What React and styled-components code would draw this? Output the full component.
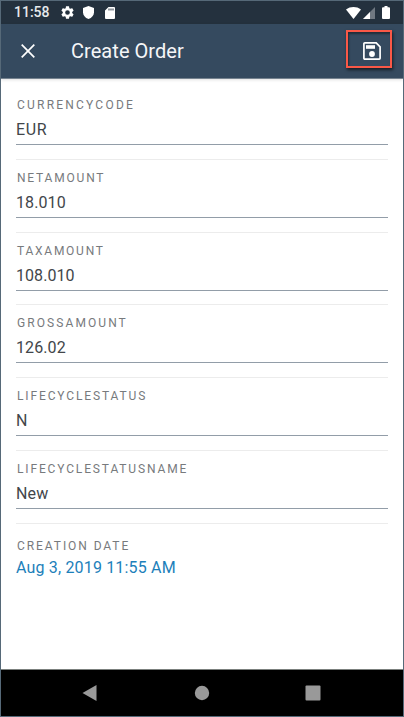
import React from 'react';
import styled, { createGlobalStyle } from 'styled-components';

const GlobalStyle = createGlobalStyle`
  * { box-sizing: border-box; }
  body { margin: 0; background: #fff; }
`;

const Screen = styled.main`
  display: flex;
  flex-direction: column;
  width: 404px;
  height: 717px;
  border: 1px solid #566978;
  background: #fff;
  overflow: hidden;
  font-family: Roboto, "Liberation Sans", sans-serif;
`;

const StatusBar = styled.div`
  display: flex;
  align-items: center;
  flex: none;
  height: 23px;
  padding: 0 13px 0 13px;
  background: #24313e;
  color: #fff;
`;

const Clock = styled.span`
  width: 46px;
  font-size: 14px;
  font-weight: 500;
  line-height: 23px;
  color: #e6e9ec;
`;

const StatusIcon = styled.svg`
  display: block;
  flex: none;
  width: ${(p) => p.$w}px;
  height: ${(p) => p.$h}px;
  margin-left: ${(p) => p.$gap || 0}px;
  fill: #fff;
`;

const Spacer = styled.span`
  flex: 1;
`;

const Toolbar = styled.header`
  display: flex;
  align-items: center;
  flex: none;
  height: 55px;
  padding: 0 11px 0 19px;
  background: #354a5f;
  border-bottom: 1px solid #76838f;
  box-shadow: 0 1px 3px rgba(0, 0, 0, 0.12);
`;

const IconButton = styled.button`
  display: flex;
  width: 16px;
  height: 16px;
  padding: 0;
  border: 0;
  background: none;
`;

const Title = styled.h1`
  flex: 1;
  margin: 0 0 1px 35px;
  font-size: 20px;
  font-weight: 400;
  line-height: 28px;
  color: #f5f6f8;
  letter-spacing: 0.05px;
`;

const SaveButton = styled.button`
  display: flex;
  align-items: center;
  justify-content: center;
  width: 46px;
  height: 38px;
  margin-top: -5px;
  padding: 5px 0 0 6px;
  border: 2px solid #fa5847;
  background: none;
  box-shadow: 1px 2px 3px rgba(0, 0, 0, 0.6), inset 1px 2px 2px rgba(0, 0, 0, 0.4);
`;

const Form = styled.section`
  flex: 1;
  padding: 8px 15px 0;
`;

const Field = styled.div`
  height: 72.8px;
  padding-top: 10.1px;
  border-bottom: 1px solid #ececec;
`;

const Label = styled.div`
  padding-left: 1px;
  height: 16px;
  font-size: 12px;
  line-height: 16px;
  letter-spacing: ${(p) => p.$spacing}px;
  color: #777a7d;
  white-space: nowrap;
`;

const Value = styled.div`
  height: 31.9px;
  padding-top: 7px;
  border-bottom: 1px solid #929da8;
  font-size: 16px;
  line-height: 20px;
  letter-spacing: ${(p) => p.$spacing}px;
  color: #42464a;
`;

const DateField = styled.div`
  padding-top: 14px;
`;

const DateValue = styled.div`
  padding-top: 4px;
  font-size: 16px;
  line-height: 20px;
  letter-spacing: 0.17px;
  color: #1c80ba;
`;

const NavBar = styled.nav`
  display: flex;
  align-items: center;
  justify-content: space-between;
  flex: none;
  height: 47px;
  padding: 0 82px 0 81px;
  border-top: 1px solid #7b807d;
  background: #000;
`;

const NavIcon = styled.svg`
  display: block;
  width: 16px;
  height: 16px;
  fill: #999;
`;

const fields = [
  { label: 'CURRENCYCODE', value: 'EUR', ls: 2.22, vs: 0.6 },
  { label: 'NETAMOUNT', value: '18.010', ls: 1.8, vs: 0.1 },
  { label: 'TAXAMOUNT', value: '108.010', ls: 1.75, vs: 0.05 },
  { label: 'GROSSAMOUNT', value: '126.02', ls: 2.08, vs: 0.1 },
  { label: 'LIFECYCLESTATUS', value: 'N', ls: 1.87, vs: 0 },
  { label: 'LIFECYCLESTATUSNAME', value: 'New', ls: 1.86, vs: 0.2 },
];

export default function App() {
  return (
    <>
      <GlobalStyle />
      <Screen>
        <StatusBar>
          <Clock>11:58</Clock>
          <StatusIcon viewBox="2 2 20 20" $w={13} $h={13} $gap={1}>
            <path d="M19.14 12.94c.04-.3.06-.61.06-.94 0-.32-.02-.64-.07-.94l2.03-1.58c.18-.14.23-.41.12-.61l-1.92-3.32c-.12-.22-.37-.29-.59-.22l-2.39.96c-.5-.38-1.03-.7-1.62-.94l-.36-2.54c-.04-.24-.24-.41-.48-.41h-3.84c-.24 0-.43.17-.47.41l-.36 2.54c-.59.24-1.13.57-1.62.94l-2.39-.96c-.22-.08-.47 0-.59.22L2.74 8.87c-.12.21-.08.47.12.61l2.03 1.58c-.05.3-.09.63-.09.94s.02.64.07.94l-2.03 1.58c-.18.14-.23.41-.12.61l1.92 3.32c.12.22.37.29.59.22l2.39-.96c.5.38 1.03.7 1.62.94l.36 2.54c.05.24.24.41.48.41h3.84c.24 0 .44-.17.47-.41l.36-2.54c.59-.24 1.13-.56 1.62-.94l2.39.96c.22.08.47 0 .59-.22l1.92-3.32c.12-.22.07-.47-.12-.61l-2.01-1.58zM12 15.6A3.6 3.6 0 1 1 12 8.4a3.6 3.6 0 0 1 0 7.2z" />
          </StatusIcon>
          <StatusIcon viewBox="0 0 11 13" $w={11} $h={13} $gap={9}>
            <path d="M5.5 0 11 2v4.2c0 3-2.1 5.6-5.5 6.8C2.1 11.8 0 9.2 0 6.2V2z" />
          </StatusIcon>
          <StatusIcon viewBox="0 0 10 12" $w={10} $h={12} $gap={11}>
            <path fillRule="evenodd" d="M3.5 0H9a1 1 0 0 1 1 1v10a1 1 0 0 1-1 1H1a1 1 0 0 1-1-1V3.5zM3.5 1.5v2h1v-2zm2 0v2h1v-2zm2 0v2h1v-2z" />
          </StatusIcon>
          <Spacer />
          <StatusIcon viewBox="0 0 15 12" $w={15} $h={12}>
            <path d="M0 2.5C4.3-.8 10.7-.8 15 2.5L7.5 12z" />
          </StatusIcon>
          <StatusIcon viewBox="0 0 12 12" $w={12} $h={12} $gap={2}>
            <path d="M12 0v12H0z" fillOpacity=".35" />
            <path d="M7 5v7H0z" />
          </StatusIcon>
          <StatusIcon viewBox="0 0 8 13" $w={8} $h={13} $gap={7}>
            <path d="M2.5 0h3v1.2H7a1 1 0 0 1 1 1V12a1 1 0 0 1-1 1H1a1 1 0 0 1-1-1V2.2a1 1 0 0 1 1-1h1.5z" />
          </StatusIcon>
        </StatusBar>
        <Toolbar>
          <IconButton aria-label="Close">
            <svg width="16" height="16" viewBox="0 0 16 16" fill="none" stroke="#fff" strokeWidth="1.7">
              <path d="M1.7 1.7 14.3 14.3M14.3 1.7 1.7 14.3" />
            </svg>
          </IconButton>
          <Title>Create Order</Title>
          <SaveButton aria-label="Save">
            <svg width="18" height="18" viewBox="0 0 18 18">
              <path d="M1.8.9h11.4l3.9 3.9v11.4a.9.9 0 0 1-.9.9H1.8a.9.9 0 0 1-.9-.9V1.8a.9.9 0 0 1 .9-.9z" fill="none" stroke="#fff" strokeWidth="1.7" />
              <path d="M3 3.2h9v3.6H3z" fill="#fff" />
              <circle cx="9" cy="12" r="2.9" fill="#fff" />
            </svg>
          </SaveButton>
        </Toolbar>
        <Form>
          {fields.map((f) => (
            <Field key={f.label}>
              <Label $spacing={f.ls}>{f.label}</Label>
              <Value $spacing={f.vs}>{f.value}</Value>
            </Field>
          ))}
          <DateField>
            <Label $spacing={1.93}>CREATION DATE</Label>
            <DateValue>Aug 3, 2019 11:55 AM</DateValue>
          </DateField>
        </Form>
        <NavBar>
          <NavIcon viewBox="0 0 16 16"><path d="M14.500 0v16L.5 8z" /></NavIcon>
          <NavIcon viewBox="0 0 16 16"><circle cx="8" cy="8" r="7.2" /></NavIcon>
          <NavIcon viewBox="0 0 16 16"><rect x=".5" y=".5" width="15" height="15" rx="1" /></NavIcon>
        </NavBar>
      </Screen>
    </>
  );
}
